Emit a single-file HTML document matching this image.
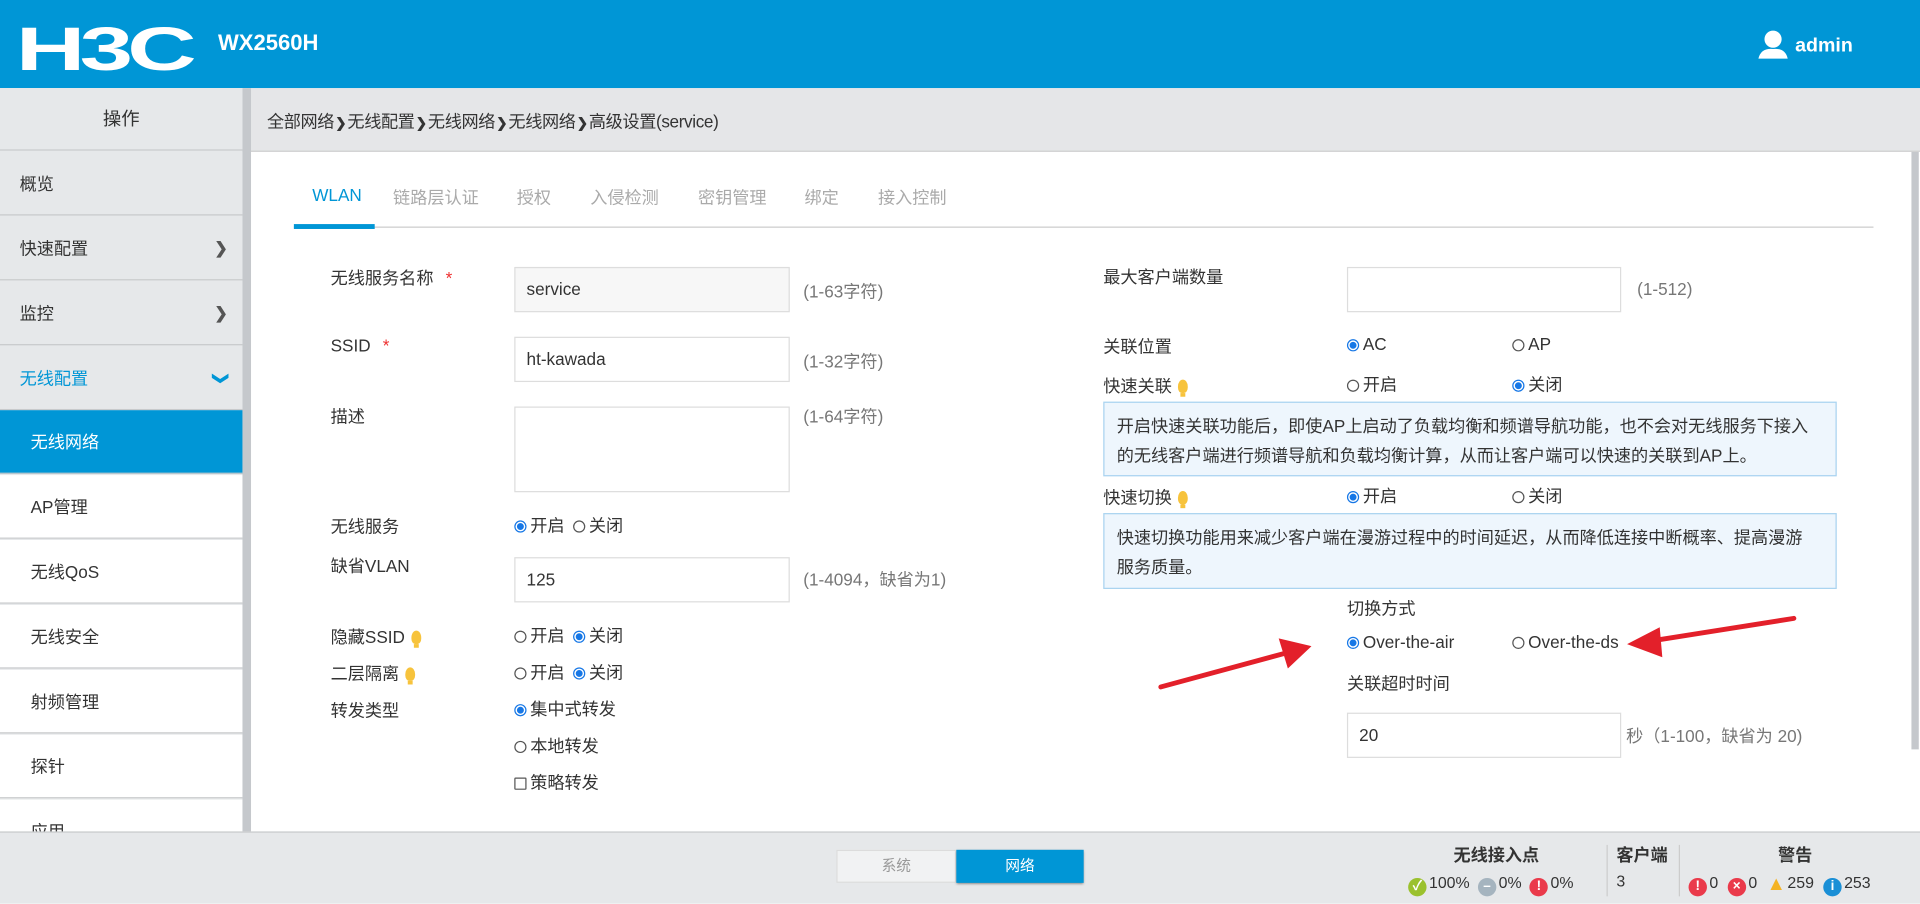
<!DOCTYPE html>
<html><head><meta charset="utf-8"><style>
html,body{margin:0;padding:0;width:1920px;height:902px;overflow:hidden;background:#fff}
#s{position:absolute;left:0;top:0;width:1568px;height:737px;transform:scale(1.22449);transform-origin:0 0;font-family:"Liberation Sans","Noto Sans CJK SC",sans-serif;font-size:14px;color:#333}
.a{position:absolute;white-space:nowrap}
.hd{left:0;top:0;width:1568px;height:72px;background:#0096d6}
.mi{position:absolute;left:0;width:198px;height:52px;border-bottom:1px solid #c8cacc;background:#e6e8ea;line-height:52px;padding-left:16px;box-sizing:border-box}
.sub{background:#fff;padding-left:25px}
.chev{position:absolute;right:12px;top:0;color:#555;font-size:13px;font-weight:bold}
.inp{position:absolute;border:1px solid #ddd;background:#fff;box-sizing:border-box;padding-left:9px;line-height:34px;height:37px}
.rd{display:inline-block;width:10px;height:10px;border:1px solid #555;border-radius:50%;vertical-align:-1px;margin-right:3px;box-sizing:border-box}
.rd.on{border:1px solid #1677e6;background:radial-gradient(circle,#1677e6 0 2.6px,#fff 3px)}
.gr{color:#777}
.bulb{display:inline-block;width:8px;height:11px;background:#f7c33c;border-radius:50% 50% 40% 40%;vertical-align:-1px;margin-left:5px;position:relative}
.bulb:after{content:"";position:absolute;left:2px;top:11px;width:4px;height:3px;background:#f7c33c}
.info{position:absolute;left:901px;width:599px;background:#eef6fd;border:1px solid #a9d3f0;box-sizing:border-box;padding:7px 10px;line-height:24px}
.ic{display:inline-block;width:15px;height:15px;border-radius:50%;color:#fff;font-size:11px;line-height:15px;text-align:center;font-weight:bold;vertical-align:-2px;margin-right:2px}
.sep{font-size:11px;font-weight:bold;margin:0 1px}
</style></head><body><div id="s">
<div class="a hd"></div>
<div class="a" style="left:13px;top:10px;color:#fff;font-size:50px;font-weight:bold;letter-spacing:-3px;line-height:60px;transform:scaleX(1.57);transform-origin:0 0">H3C</div>
<div class="a" style="left:178px;top:25px;color:#fff;font-size:18px;font-weight:bold">WX2560H</div>
<svg class="a" style="left:1435px;top:24px" width="26" height="24" viewBox="0 0 26 24"><circle cx="13" cy="8" r="7" fill="#fff"/><path d="M1 24 Q3 15 13 16 Q23 15 25 24Z" fill="#fff"/></svg>
<div class="a" style="left:1466px;top:29px;color:#fff;font-size:16px;font-weight:bold">admin</div>

<div class="a" style="left:0;top:72px;width:1568px;height:51px;background:#e5e6e8;border-bottom:1px solid #d0d0d0"></div>
<div class="a" style="left:218px;top:89px;letter-spacing:-0.3px">全部网络<span class="sep">❯</span>无线配置<span class="sep">❯</span>无线网络<span class="sep">❯</span>无线网络<span class="sep">❯</span>高级设置(service)</div>

<div class="a" style="left:0;top:72px;width:198px;height:607px;background:#e6e8ea"></div>
<div class="a" style="left:198px;top:72px;width:7px;height:607px;background:#c5c8cc"></div>
<div class="mi" style="top:72px;height:51px;text-align:center;padding:0;font-size:15px">操作</div>
<div class="mi" style="top:124px">概览</div>
<div class="mi" style="top:177px">快速配置<span class="chev">❯</span></div>
<div class="mi" style="top:230px">监控<span class="chev">❯</span></div>
<div class="mi" style="top:283px;color:#0096d6">无线配置<span class="chev" style="color:#0096d6;transform:rotate(90deg);right:12px">❯</span></div>
<div class="mi sub" style="top:335px;background:#0096d6;color:#fff">无线网络</div>
<div class="mi sub" style="top:388px">AP管理</div>
<div class="mi sub" style="top:441px">无线QoS</div>
<div class="mi sub" style="top:494px">无线安全</div>
<div class="mi sub" style="top:547px">射频管理</div>
<div class="mi sub" style="top:600px">探针</div>
<div class="mi sub" style="top:653px">应用</div>

<div class="a" style="left:1561px;top:124px;width:6px;height:488px;background:#c5c8cc"></div>

<div class="a" style="left:240px;top:185px;width:1290px;height:1px;background:#ccc"></div>
<div class="a" style="left:240px;top:183px;width:66px;height:4px;background:#0096d6"></div>
<div class="a" style="left:255px;top:151px;color:#0096d6">WLAN</div>
<div class="a" style="left:321px;top:151px;color:#aaa">链路层认证</div>
<div class="a" style="left:422px;top:151px;color:#aaa">授权</div>
<div class="a" style="left:482px;top:151px;color:#aaa">入侵检测</div>
<div class="a" style="left:570px;top:151px;color:#aaa">密钥管理</div>
<div class="a" style="left:657px;top:151px;color:#aaa">绑定</div>
<div class="a" style="left:717px;top:151px;color:#aaa">接入控制</div>

<div class="a" style="left:270px;top:217px">无线服务名称 <span style="color:#e33;margin-left:6px">*</span></div>
<div class="inp" style="left:420px;top:218px;width:225px;background:#f7f7f7">service</div>
<div class="a gr" style="left:656px;top:228px">(1-63字符)</div>
<div class="a" style="left:270px;top:274px">SSID <span style="color:#e33;margin-left:6px">*</span></div>
<div class="inp" style="left:420px;top:275px;width:225px">ht-kawada</div>
<div class="a gr" style="left:656px;top:285px">(1-32字符)</div>
<div class="a" style="left:270px;top:330px">描述</div>
<div class="inp" style="left:420px;top:332px;width:225px;height:70px"></div>
<div class="a gr" style="left:656px;top:330px">(1-64字符)</div>
<div class="a" style="left:270px;top:420px">无线服务</div>
<div class="a" style="left:420px;top:419px"><span class="rd on"></span>开启 <span class="rd" style="margin-left:3px"></span>关闭</div>
<div class="a" style="left:270px;top:452px">缺省VLAN</div>
<div class="inp" style="left:420px;top:455px;width:225px">125</div>
<div class="a gr" style="left:656px;top:463px">(1-4094，缺省为1)</div>
<div class="a" style="left:270px;top:510px">隐藏SSID<span class="bulb"></span></div>
<div class="a" style="left:420px;top:509px"><span class="rd"></span>开启 <span class="rd on" style="margin-left:3px"></span>关闭</div>
<div class="a" style="left:270px;top:540px">二层隔离<span class="bulb"></span></div>
<div class="a" style="left:420px;top:539px"><span class="rd"></span>开启 <span class="rd on" style="margin-left:3px"></span>关闭</div>
<div class="a" style="left:270px;top:570px">转发类型</div>
<div class="a" style="left:420px;top:569px"><span class="rd on"></span>集中式转发</div>
<div class="a" style="left:420px;top:599px"><span class="rd"></span>本地转发</div>
<div class="a" style="left:420px;top:629px"><span class="rd" style="border-radius:1px"></span>策略转发</div>

<div class="a" style="left:901px;top:216px">最大客户端数量</div>
<div class="inp" style="left:1100px;top:218px;width:224px"></div>
<div class="a gr" style="left:1337px;top:228px">(1-512)</div>
<div class="a" style="left:901px;top:273px">关联位置</div>
<div class="a" style="left:1100px;top:273px"><span class="rd on"></span>AC</div>
<div class="a" style="left:1235px;top:273px"><span class="rd"></span>AP</div>
<div class="a" style="left:901px;top:305px">快速关联<span class="bulb"></span></div>
<div class="a" style="left:1100px;top:304px"><span class="rd"></span>开启</div>
<div class="a" style="left:1235px;top:304px"><span class="rd on"></span>关闭</div>
<div class="info" style="top:328px;height:61px">开启快速关联功能后，即使AP上启动了负载均衡和频谱导航功能，也不会对无线服务下接入的无线客户端进行频谱导航和负载均衡计算，从而让客户端可以快速的关联到AP上。</div>
<div class="a" style="left:901px;top:396px">快速切换<span class="bulb"></span></div>
<div class="a" style="left:1100px;top:395px"><span class="rd on"></span>开启</div>
<div class="a" style="left:1235px;top:395px"><span class="rd"></span>关闭</div>
<div class="info" style="top:419px;height:62px;padding-right:16px">快速切换功能用来减少客户端在漫游过程中的时间延迟，从而降低连接中断概率、提高漫游服务质量。</div>
<div class="a" style="left:1100px;top:487px">切换方式</div>
<div class="a" style="left:1100px;top:516px"><span class="rd on"></span>Over-the-air</div>
<div class="a" style="left:1235px;top:516px"><span class="rd"></span>Over-the-ds</div>
<div class="a" style="left:1100px;top:548px">关联超时时间</div>
<div class="inp" style="left:1100px;top:582px;width:224px">20</div>
<div class="a gr" style="left:1328px;top:591px">秒（1-100，缺省为 20)</div>
<svg class="a" style="left:0;top:0" width="1568" height="737"><g stroke="#e3202a" stroke-width="4" fill="#e3202a" stroke-linecap="round"><line x1="948" y1="561" x2="1055" y2="532"/><polygon points="1070,528 1045,522 1052,545" stroke-width="1"/><line x1="1465" y1="505" x2="1345" y2="524"/><polygon points="1330,526 1355,513 1357,536" stroke-width="1"/></g></svg>

<div class="a" style="left:0;top:679px;width:1568px;height:58px;background:#e6e8ea;border-top:1px solid #c8cacc"></div>
<div class="a" style="left:683px;top:694px;width:98px;height:27px;background:#f1f2f3;border:1px solid #dcdcdc;box-sizing:border-box;color:#999;font-size:12px;line-height:25px;text-align:center">系统</div>
<div class="a" style="left:781px;top:694px;width:104px;height:27px;background:#0096d6;color:#fff;font-size:12px;line-height:27px;text-align:center;box-shadow:0 1px 2px #777">网络</div>
<div class="a" style="left:1187px;top:688px;font-weight:bold">无线接入点</div>
<div class="a" style="left:1150px;top:713px;font-size:13px"><span class="ic" style="background:#9bc12e">✓</span>100% <span class="ic" style="background:#a5b4bf;margin-left:3px">–</span>0% <span class="ic" style="background:#ea3a4b;margin-left:3px">!</span>0%</div>
<div class="a" style="left:1312px;top:690px;width:1px;height:42px;background:#ccc"></div>
<div class="a" style="left:1320px;top:688px;font-weight:bold">客户端</div>
<div class="a" style="left:1320px;top:712px;font-size:13px">3</div>
<div class="a" style="left:1371px;top:690px;width:1px;height:42px;background:#ccc"></div>
<div class="a" style="left:1452px;top:688px;font-weight:bold">警告</div>
<div class="a" style="left:1379px;top:713px;font-size:13px"><span class="ic" style="background:#ea3a4b">!</span>0 <span class="ic" style="background:#ea3a4b;margin-left:4px">×</span>0 <span class="ic" style="background:none;color:#f4b324;font-size:16px;margin-left:4px">▲</span>259 <span class="ic" style="background:#1a8fd6;margin-left:4px">i</span>253</div>
</div></body></html>
